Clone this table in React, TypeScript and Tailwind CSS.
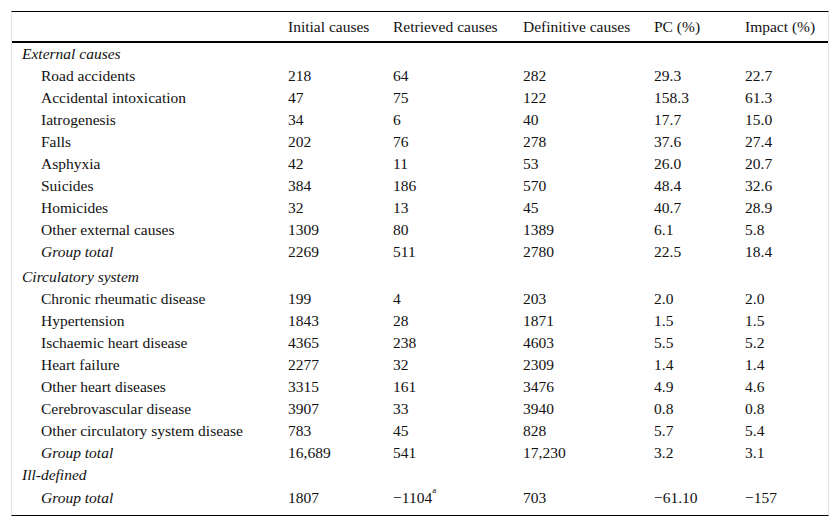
type Row = {
  label: string;
  kind: "cat" | "item" | "total";
  values?: string[];
  extra?: string;
};

const rows: Row[] = [
  { label: "External causes", kind: "cat" },
  { label: "Road accidents", kind: "item", values: ["218", "64", "282", "29.3", "22.7"] },
  { label: "Accidental intoxication", kind: "item", values: ["47", "75", "122", "158.3", "61.3"] },
  { label: "Iatrogenesis", kind: "item", values: ["34", "6", "40", "17.7", "15.0"] },
  { label: "Falls", kind: "item", values: ["202", "76", "278", "37.6", "27.4"] },
  { label: "Asphyxia", kind: "item", values: ["42", "11", "53", "26.0", "20.7"] },
  { label: "Suicides", kind: "item", values: ["384", "186", "570", "48.4", "32.6"] },
  { label: "Homicides", kind: "item", values: ["32", "13", "45", "40.7", "28.9"] },
  { label: "Other external causes", kind: "item", values: ["1309", "80", "1389", "6.1", "5.8"] },
  { label: "Group total", kind: "total", values: ["2269", "511", "2780", "22.5", "18.4"] },
  { label: "Circulatory system", kind: "cat", extra: "pt-[3px]" },
  { label: "Chronic rheumatic disease", kind: "item", values: ["199", "4", "203", "2.0", "2.0"] },
  { label: "Hypertension", kind: "item", values: ["1843", "28", "1871", "1.5", "1.5"] },
  { label: "Ischaemic heart disease", kind: "item", values: ["4365", "238", "4603", "5.5", "5.2"] },
  { label: "Heart failure", kind: "item", values: ["2277", "32", "2309", "1.4", "1.4"] },
  { label: "Other heart diseases", kind: "item", values: ["3315", "161", "3476", "4.9", "4.6"] },
  { label: "Cerebrovascular disease", kind: "item", values: ["3907", "33", "3940", "0.8", "0.8"] },
  { label: "Other circulatory system disease", kind: "item", values: ["783", "45", "828", "5.7", "5.4"] },
  { label: "Group total", kind: "total", values: ["16,689", "541", "17,230", "3.2", "3.1"] },
  { label: "Ill-defined", kind: "cat" },
  { label: "Group total", kind: "total", values: ["1807", "−1104", "703", "−61.10", "−157"], extra: "pt-[1px] pb-[6px]" },
];

const headers = ["Initial causes", "Retrieved causes", "Definitive causes", "PC (%)", "Impact (%)"];

export default function App() {
  return (
    <div className="min-h-[527px] bg-white text-[#111] font-['Liberation_Serif','Times_New_Roman',serif] text-[15.5px]">
      <div className="ml-[11px] pt-[11px] w-[818px]">
        <div className="border-t border-t-black border-b border-b-black border-x border-x-[#e2e2e2]">
          <table className="w-[816px] table-fixed border-collapse">
            <colgroup>
              <col className="w-[266px]" />
              <col className="w-[105px]" />
              <col className="w-[130px]" />
              <col className="w-[131px]" />
              <col className="w-[91px]" />
              <col className="w-[93px]" />
            </colgroup>
            <thead>
              <tr className="border-b-2 border-black">
                <th className="h-[29px] p-0" />
                {headers.map((h) => (
                  <th key={h} className="h-[29px] p-0 pl-[10px] text-left font-normal leading-[29px] whitespace-nowrap">
                    {h}
                  </th>
                ))}
              </tr>
            </thead>
            <tbody>
              {rows.map((r, i) => (
                <tr key={i} className="leading-[22px]">
                  <td
                    className={`p-0 whitespace-nowrap ${r.extra ?? ""} ${
                      r.kind === "cat" ? "pl-[10px] italic" : r.kind === "total" ? "pl-[29px] italic" : "pl-[29px]"
                    }`}
                  >
                    {r.label}
                  </td>
                  {r.values
                    ? r.values.map((v, j) => (
                        <td key={j} className={`p-0 pl-[10px] whitespace-nowrap ${r.extra ?? ""}`}>
                          {v}
                          {i === 20 && j === 1 ? <sup className="text-[9px] align-[6px] leading-none">a</sup> : null}
                        </td>
                      ))
                    : Array.from({ length: 5 }).map((_, j) => <td key={j} className={`p-0 ${r.extra ?? ""}`} />)}
                </tr>
              ))}
            </tbody>
          </table>
        </div>
      </div>
    </div>
  );
}
